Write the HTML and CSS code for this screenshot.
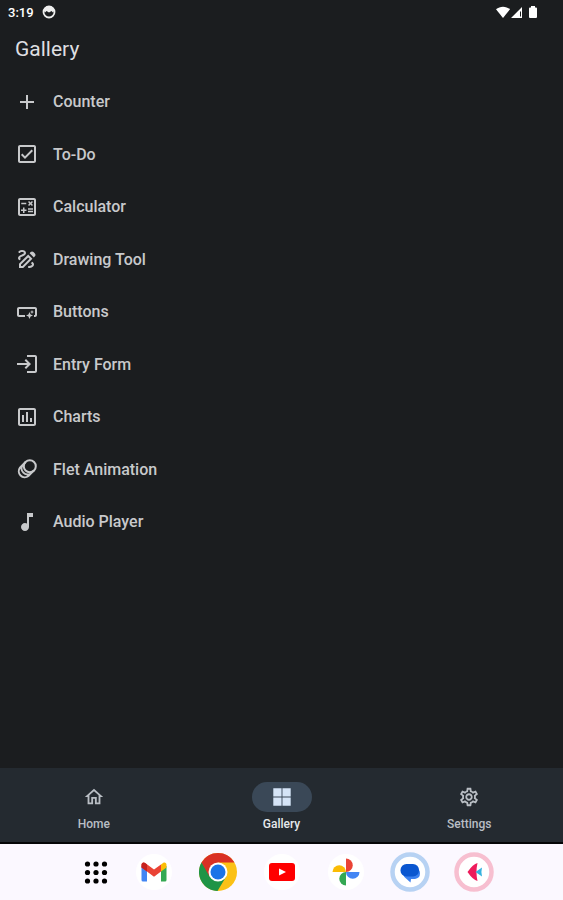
FILE: index.html
```html
<!DOCTYPE html>
<html lang="en">
<head>
    <meta charset="UTF-8">
    <meta name="viewport" content="width=device-width, initial-scale=1.0">
    <title>Gallery</title>
    <link rel="stylesheet" href="styles.css">
</head>
<body>
    <div class="status-bar">
        <span class="clock">3:19</span>
        <svg class="status-face" viewBox="0 0 14 14">
            <circle cx="7" cy="7" r="5.500" fill="none" stroke="#eee" stroke-width="1.800"/>
            <path d="M2 6V3.500L5 1.300h4L12 3.500V6L11 7.500 9.500 6 7 7.500 4.500 6 3 7.500z" fill="#eee"/>
        </svg>
        <svg class="status-signals" viewBox="0 0 44 14">
            <path d="M1 4.200C5 .8 11 .8 15 4.200L8 13z"/>
            <path d="M27 2v11H16zM25 6.500v5h1v-5z" fill-rule="evenodd"/>
            <path d="M36 1h4v1.500h1q1 0 1 1V12q0 1-1 1h-6q-1 0-1-1V3.500q0-1 1-1h1z"/>
        </svg>
    </div>

    <header class="app-bar">
        <h1>Gallery</h1>
    </header>

    <main class="content">
        <ul class="gallery-list">
            <li><a href="#counter">
                <svg class="icon" viewBox="0 0 24 24"><path d="M19 13h-6v6h-2v-6H5v-2h6V5h2v6h6z"/></svg>
                Counter
            </a></li>
            <li><a href="#todo">
                <svg class="icon" viewBox="0 0 24 24"><path d="M19 3H5c-1.100 0-2 .9-2 2v14c0 1.100.9 2 2 2h14c1.100 0 2-.9 2-2V5c0-1.100-.9-2-2-2zm0 16H5V5h14v14zM17.990 9l-1.410-1.420-6.590 6.590-2.580-2.570-1.420 1.410 4 3.990z"/></svg>
                To-Do
            </a></li>
            <li><a href="#calculator">
                <svg class="icon" viewBox="0 0 24 24"><path d="M19 3H5c-1.100 0-2 .9-2 2v14c0 1.100.9 2 2 2h14c1.100 0 2-.9 2-2V5c0-1.100-.9-2-2-2zm0 16H5V5h14v14z"/><path d="M6.250 7.720h5v1.500h-5zM13 15.750h5v1.500h-5zM13 13.250h5v1.500h-5zM8 18h1.500v-2h2v-1.500h-2v-2H8v2H6V16h2zM14.090 10.950l1.410-1.410 1.410 1.410 1.060-1.060-1.410-1.420 1.410-1.410L16.910 6 15.500 7.410 14.090 6l-1.060 1.060 1.410 1.410-1.410 1.420z"/></svg>
                Calculator
            </a></li>
            <li><a href="#drawing">
                <svg class="icon" viewBox="0 0 24 24"><path d="M18.850 10.390l1.060-1.060c.78-.78.78-2.050 0-2.830L18.500 5.090c-.78-.78-2.050-.78-2.830 0l-1.060 1.060 4.240 4.240zM13.190 7.560L4 16.760V21h4.240l9.190-9.190-4.240-4.250zM7.410 19H6v-1.410l7.190-7.190 1.410 1.410L7.410 19z" fill-rule="evenodd"/><path d="M19 17.500c0 2.190-2.540 3.500-5 3.500-.55 0-1-.45-1-1s.45-1 1-1c1.540 0 3-.73 3-1.500 0-.47-.48-.87-1.230-1.200l1.480-1.480c1.070.63 1.750 1.470 1.750 2.680zM4.580 13.350C3.610 12.790 3 12.060 3 11c0-1.800 1.890-2.630 3.560-3.360C7.590 7.180 9 6.560 9 6c0-.41-.78-1-2-1-1.260 0-1.800.61-1.830.64-.35.41-.98.46-1.400.12-.41-.34-.49-.95-.15-1.380C3.730 4.240 4.760 3 7 3s4 1.320 4 3c0 1.870-1.930 2.720-3.640 3.470C6.420 9.880 5 10.500 5 11c0 .31.430.6 1.070.86l-1.490 1.490z"/></svg>
                Drawing Tool
            </a></li>
            <li><a href="#buttons">
                <svg class="icon" viewBox="0 0 24 24"><path d="M22 9v6c0 1.100-.9 2-2 2h-1v-2h1V9H4v6h6v2H4c-1.100 0-2-.9-2-2V9c0-1.100.9-2 2-2h16c1.100 0 2 .9 2 2zM14.500 19l1.090-2.410L18 15.500l-2.410-1.090L14.500 12l-1.090 2.410L11 15.500l2.410 1.090zM17 14l.62-1.380L19 12l-1.380-.62L17 10l-.62 1.380L15 12l1.380.62z"/></svg>
                Buttons
            </a></li>
            <li><a href="#form">
                <svg class="icon" viewBox="0 0 24 24"><path d="M11 7L9.600 8.400l2.600 2.600H2v2h10.200l-2.600 2.600L11 17l5-5-5-5zm9 12h-8v2h8c1.100 0 2-.9 2-2V5c0-1.100-.9-2-2-2h-8v2h8v14z"/></svg>
                Entry Form
            </a></li>
            <li><a href="#charts">
                <svg class="icon" viewBox="0 0 24 24"><path d="M9 17H7v-7h2v7zm4 0h-2V7h2v10zm4 0h-2v-4h2v4zm2 2H5V5h14v14zm0-16H5c-1.100 0-2 .9-2 2v14c0 1.100.9 2 2 2h14c1.100 0 2-.9 2-2V5c0-1.100-.9-2-2-2z"/></svg>
                Charts
            </a></li>
            <li><a href="#animation">
                <svg class="icon line" viewBox="0 0 24 24"><circle cx="14.800" cy="9.200" r="6"/><path d="M10.600 5L5 10.600A6 6 0 0 0 13.400 19L19 13.400M7.800 7.800A6 6 0 0 0 16.200 16.200"/></svg>
                Flet Animation
            </a></li>
            <li><a href="#audio">
                <svg class="icon" viewBox="0 0 24 24"><path d="M12 3v10.550c-.59-.34-1.270-.55-2-.55-2.210 0-4 1.790-4 4s1.790 4 4 4 4-1.790 4-4V7h4V3h-6z"/></svg>
                Audio Player
            </a></li>
        </ul>
    </main>

    <nav class="nav-bar">
        <a class="nav-item" href="#home">
            <span class="pill"><svg viewBox="0 0 24 24"><path d="M12 5.690l5 4.500V18h-2v-6H9v6H7v-7.810l5-4.500M12 3L2 12h3v8h6v-6h2v6h6v-8h3L12 3z"/></svg></span>
            Home
        </a>
        <a class="nav-item active" href="#gallery">
            <span class="pill"><svg viewBox="0 0 24 24"><path d="M2.500 2.500h9v9h-9zM12.500 2.500h9v9h-9zM2.500 12.500h9v9h-9zM12.500 12.500h9v9h-9z"/></svg></span>
            Gallery
        </a>
        <a class="nav-item" href="#settings">
            <span class="pill"><svg viewBox="0 0 24 24"><path d="M19.430 12.980c.04-.32.07-.64.07-.98 0-.34-.03-.66-.07-.98l2.110-1.650c.19-.15.24-.42.12-.64l-2-3.460c-.09-.16-.26-.25-.44-.25-.06 0-.12.01-.17.03l-2.490 1c-.52-.4-1.080-.73-1.690-.98l-.38-2.650C14.460 2.180 14.250 2 14 2h-4c-.25 0-.46.18-.49.42l-.38 2.650c-.61.25-1.170.59-1.690.98l-2.490-1c-.06-.02-.12-.03-.18-.03-.17 0-.34.09-.43.25l-2 3.460c-.13.22-.07.49.12.64l2.110 1.650c-.04.32-.07.65-.07.98 0 .33.03.66.07.98l-2.110 1.650c-.19.15-.24.42-.12.64l2 3.460c.09.16.26.25.44.25.06 0 .12-.01.17-.03l2.490-1c.52.4 1.080.73 1.690.98l.38 2.650c.03.24.24.42.49.42h4c.25 0 .46-.18.49-.42l.38-2.650c.61-.25 1.170-.59 1.690-.98l2.490 1c.06.02.12.03.18.03.17 0 .34-.09.43-.25l2-3.460c.12-.22.07-.49-.12-.64l-2.110-1.650zm-1.980-1.710c.04.31.05.52.05.73 0 .21-.02.43-.05.73l-.14 1.130.89.7 1.080.84-.7 1.210-1.270-.51-1.040-.42-.9.68c-.43.32-.84.56-1.250.73l-1.060.43-.16 1.130-.2 1.350h-1.400l-.19-1.350-.16-1.130-1.060-.43c-.43-.18-.83-.41-1.230-.71l-.91-.7-1.060.43-1.270.51-.7-1.210 1.080-.84.89-.7-.14-1.130c-.03-.31-.05-.54-.05-.74s.02-.43.05-.73l.14-1.130-.89-.7-1.080-.84.7-1.210 1.270.51 1.040.42.9-.68c.43-.32.84-.56 1.250-.73l1.060-.43.16-1.130.2-1.350h1.390l.19 1.350.16 1.130 1.060.43c.43.18.83.41 1.230.71l.91.7 1.060-.43 1.270-.51.7 1.210-1.070.85-.89.7.14 1.130zM12 8c-2.210 0-4 1.790-4 4s1.790 4 4 4 4-1.790 4-4-1.790-4-4-4zm0 6c-1.100 0-2-.9-2-2s.9-2 2-2 2 .9 2 2-.9 2-2 2z"/></svg></span>
            Settings
        </a>
    </nav>

    <footer class="dock">
        <button class="apps" aria-label="All apps">
            <svg viewBox="0 0 40 40" fill="#111"><circle cx="11.500" cy="12" r="2.600"/><circle cx="20" cy="12" r="2.600"/><circle cx="28.500" cy="12" r="2.600"/><circle cx="11.500" cy="20.500" r="2.600"/><circle cx="20" cy="20.500" r="2.600"/><circle cx="28.500" cy="20.500" r="2.600"/><circle cx="11.500" cy="29" r="2.600"/><circle cx="20" cy="29" r="2.600"/><circle cx="28.500" cy="29" r="2.600"/></svg>
        </button>
        <button aria-label="Gmail">
            <svg viewBox="0 0 40 40"><circle cx="20" cy="20" r="18" fill="#fff"/><path d="M7.500 14v14q0 1.500 1.500 1.500h4V17z" fill="#4285f4"/><path d="M27 17v12.500h4q1.500 0 1.500-1.500V14z" fill="#34a853"/><path d="M27 12.500l2-1.500c2-1.300 3.500.3 3.500 2v2.500L27 19.500z" fill="#fbbc04"/><path d="M7.500 15.500V13c0-2 2-3.300 4-1.700l8.500 6.200 7-5v7l-7 5.300-7-5.300z" fill="#ea4335"/><path d="M7.500 15.500V13c0-2 2-3.300 4-1.700L13 12.500v7z" fill="#c5221f"/></svg>
        </button>
        <button aria-label="Chrome">
            <svg viewBox="0 0 40 40"><circle cx="20" cy="20" r="19" fill="#fbc116"/><path d="M20 20L3.500 10.500A19 19 0 0 0 19.500 39L28.500 24z" fill="#1e9446"/><path d="M20 20L11.500 24.500 3.500 10.500A19 19 0 0 1 36.500 10.500H20z" fill="#d93025"/><circle cx="20" cy="20" r="9.500" fill="#fff"/><circle cx="20" cy="20" r="7.500" fill="#1a73e8"/></svg>
        </button>
        <button aria-label="YouTube">
            <svg viewBox="0 0 40 40"><circle cx="20" cy="20" r="18" fill="#fff"/><rect x="7" y="11" width="26" height="18" rx="3" fill="#f00"/><path d="M17 16.500l7 3.500-7 3.500z" fill="#fff"/></svg>
        </button>
        <button aria-label="Photos">
            <svg viewBox="0 0 40 40"><circle cx="20" cy="20" r="18" fill="#fff"/><path d="M20 6.500A6.700 6.700 0 0 1 20 20z" fill="#ea4335"/><path d="M33.500 20A6.700 6.700 0 0 1 20 20z" fill="#4285f4"/><path d="M20 33.500A6.700 6.700 0 0 1 20 20z" fill="#34a853"/><path d="M6.500 20A6.700 6.700 0 0 1 20 20z" fill="#fbbc04"/></svg>
        </button>
        <button aria-label="Messages">
            <svg viewBox="0 0 40 40"><circle cx="20" cy="20" r="17.500" fill="#fff" stroke="#b7d2f3" stroke-width="4.500"/><path d="M13 17h13.500q3.500 0 3.500 4.500T25 27h-4l-.5 3.500L15.500 26q-3-2-2.500-9z" fill="#3d82f0"/><rect x="10.500" y="12" width="18.500" height="12.500" rx="6" fill="#0b57d0"/></svg>
        </button>
        <button aria-label="Flet">
            <svg viewBox="0 0 40 40"><circle cx="20" cy="20" r="17.500" fill="#fff" stroke="#f7bfd0" stroke-width="4.500"/><path d="M23.500 11q-4.500 1-10 9 5.500 8 10 9-2-9 0-18z" fill="#ee1c5c"/><path d="M21.500 20l6.500-4.500q-1.200 4.500 0 9z" fill="#35b2df"/></svg>
        </button>
    </footer>
</body>
</html>
```

FILE: styles.css
```css
* {
    box-sizing: border-box;
}

body {
    margin: 0;
    min-height: 100vh;
    display: flex;
    flex-direction: column;
    background: #1b1d1f;
    color: #c8c9cb;
    font-family: Roboto, "Liberation Sans", sans-serif;
}

a {
    color: inherit;
    text-decoration: none;
}

svg {
    display: block;
    fill: currentColor;
}

.status-bar {
    display: flex;
    align-items: center;
    height: 24px;
    padding: 0 24px 0 8px;
    color: #fff;
}

.clock {
    font-size: 13px;
    font-weight: 500;
}

.status-face {
    width: 14px;
    height: 14px;
    margin-left: 8px;
}

.status-signals {
    width: 44px;
    height: 14px;
    margin-left: auto;
}

.app-bar {
    padding: 12px 15px 13px;
}

.app-bar h1 {
    margin: 0;
    font-size: 21px;
    font-weight: 400;
    line-height: 26px;
    color: #dedfe1;
}

.content {
    flex: 1;
}

.gallery-list {
    display: grid;
    grid-auto-rows: 53px 52px;
    margin: 0;
    padding: 0;
    list-style: none;
}

.gallery-list a {
    display: flex;
    align-items: center;
    gap: 14px;
    height: 100%;
    padding: 0 15px;
    font-size: 16px;
    font-weight: 500;
}

.icon {
    width: 24px;
    height: 24px;
}

.line {
    fill: none;
    stroke: currentColor;
    stroke-width: 2;
}

.nav-bar {
    display: flex;
    padding: 14px 0 10px;
    background: #242a30;
    border-bottom: 2px solid #050607;
}

.nav-item {
    flex: 1;
    display: flex;
    flex-direction: column;
    align-items: center;
    gap: 4px;
    font-size: 12px;
    font-weight: 500;
    line-height: 16px;
    color: #b9bec4;
}

.pill {
    padding: 4px 19px;
    border-radius: 15px;
}

.pill svg {
    width: 22px;
    height: 22px;
}

.active {
    color: #e6e9ec;
}

.active .pill {
    background: #3a4857;
    color: #d5e4f7;
}

.dock {
    display: flex;
    justify-content: center;
    padding: 8px 0 8px 12px;
    background: #fbf8ff;
}

.dock button {
    display: flex;
    justify-content: center;
    width: 64px;
    padding: 0;
    border: 0;
    background: none;
}

.dock .apps {
    width: 52px;
}

.dock svg {
    width: 40px;
    height: 40px;
}
```
